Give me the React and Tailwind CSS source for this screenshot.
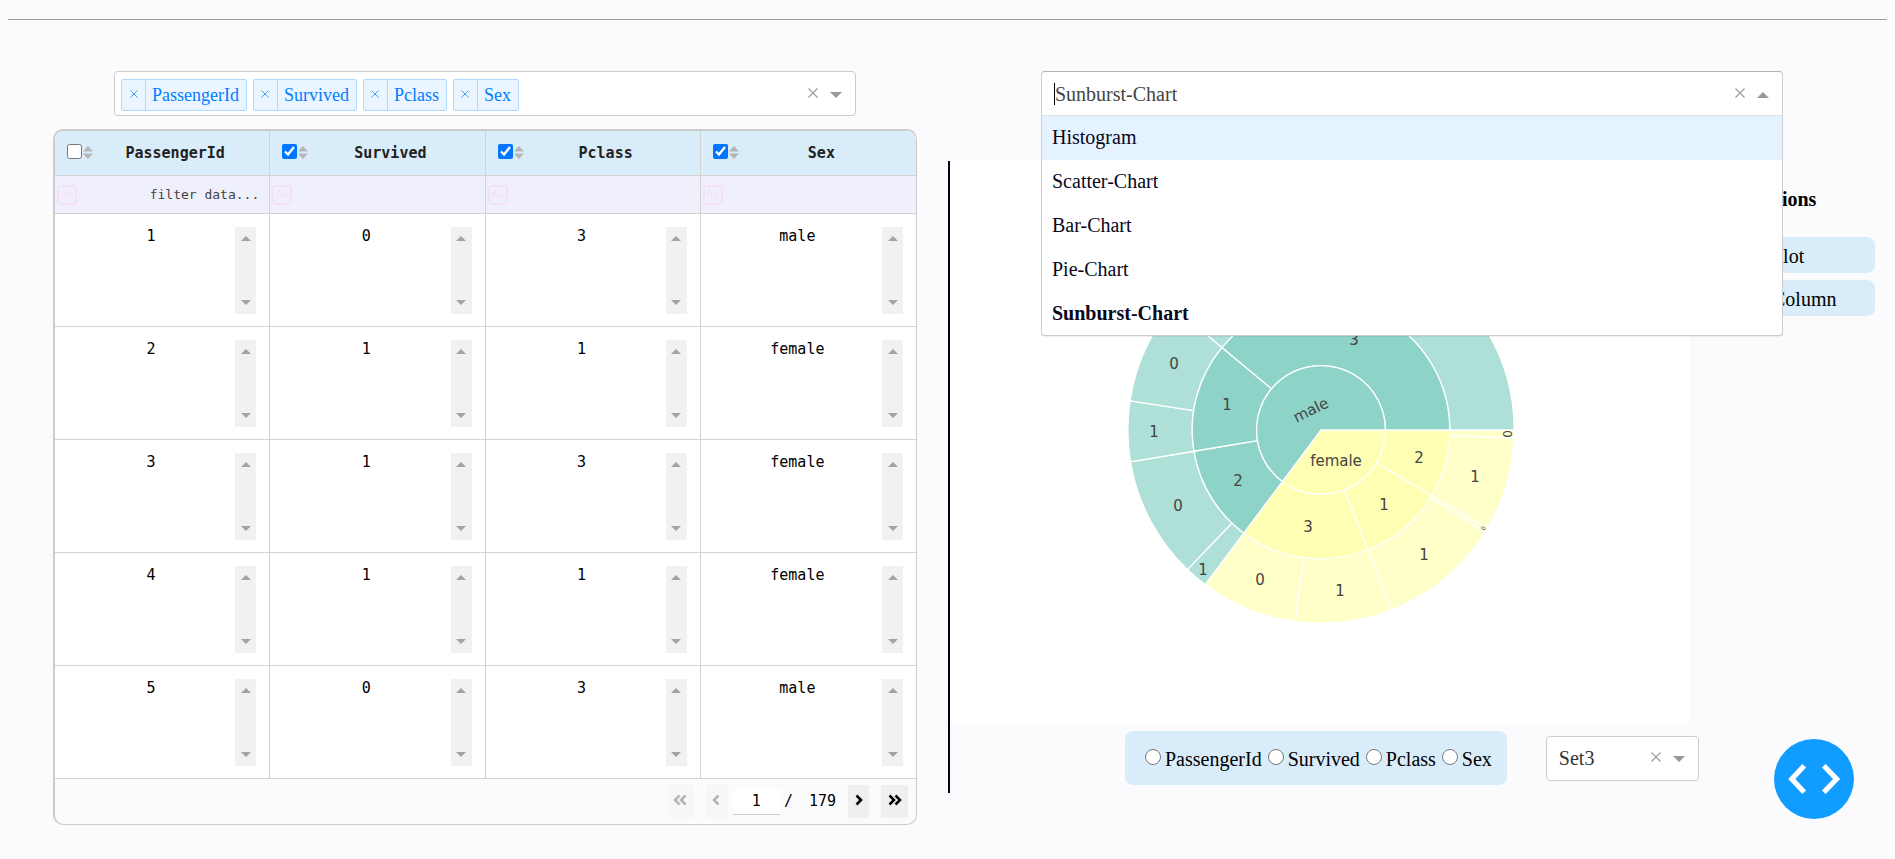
import React from "react";

const COLUMNS = ["PassengerId", "Survived", "Pclass", "Sex"];

const ROWS = [
  ["1", "0", "3", "male"],
  ["2", "1", "1", "female"],
  ["3", "1", "3", "female"],
  ["4", "1", "1", "female"],
  ["5", "0", "3", "male"],
];

const CHARTS = ["Histogram", "Scatter-Chart", "Bar-Chart", "Pie-Chart", "Sunburst-Chart"];

/* Passenger counts, in the clockwise order in which the slices are laid out. */
const TREE = [
  {
    label: "female",
    fill: "#ffffb3",
    children: [
      { label: "2", leaves: [["0", 6], ["1", 70]] },
      { label: "1", leaves: [["0", 3], ["1", 91]] },
      { label: "3", leaves: [["1", 72], ["0", 72]] },
    ],
  },
  {
    label: "male",
    fill: "#8dd3c7",
    children: [
      { label: "2", leaves: [["1", 17], ["0", 91]] },
      { label: "1", leaves: [["1", 45], ["0", 77]] },
      { label: "3", leaves: [["1", 47], ["0", 300]] },
    ],
  },
];

const TOTAL = 891;
const RING = 64.4;

function point(radius, angle) {
  return `${(radius * Math.cos(angle)).toFixed(2)} ${(radius * Math.sin(angle)).toFixed(2)}`;
}

function sector(inner, outer, from, to) {
  const large = to - from > Math.PI ? 1 : 0;
  const start = inner === 0 ? "M0 0" : `M${point(inner, from)}`;
  const back = inner === 0 ? "" : `L${point(inner, to)}A${inner} ${inner} 0 ${large} 0 ${point(inner, from)}`;
  return `${start}L${point(outer, from)}A${outer} ${outer} 0 ${large} 1 ${point(outer, to)}${back}Z`;
}

function buildSlices() {
  const slices = [];
  const turn = (Math.PI * 2) / TOTAL;
  let count = 0;
  TREE.forEach((sex) => {
    const sexStart = count;
    sex.children.forEach((pclass) => {
      const classStart = count;
      pclass.leaves.forEach(([, n]) => {
        slices.push({ d: sector(RING * 2, RING * 3, count * turn, (count + n) * turn), fill: sex.fill, opacity: 0.7 });
        count += n;
      });
      slices.push({ d: sector(RING, RING * 2, classStart * turn, count * turn), fill: sex.fill, opacity: 1 });
    });
    slices.push({ d: sector(0, RING, sexStart * turn, count * turn), fill: sex.fill, opacity: 1 });
  });
  return slices;
}

const LABELS = [
  { text: "male", x: -10, y: -20, rotate: -26 },
  { text: "female", x: 15, y: 31 },
  { text: "3", x: 33, y: -90 },
  { text: "1", x: -94, y: -25 },
  { text: "2", x: -83, y: 51 },
  { text: "3", x: -13, y: 97 },
  { text: "1", x: 63, y: 75 },
  { text: "2", x: 98, y: 28 },
  { text: "0", x: -147, y: -66 },
  { text: "1", x: -167, y: 2 },
  { text: "0", x: -143, y: 76 },
  { text: "1", x: -118, y: 140 },
  { text: "0", x: -61, y: 150 },
  { text: "1", x: 19, y: 161 },
  { text: "1", x: 103, y: 125 },
  { text: "1", x: 154, y: 47 },
  { text: "0", x: 187, y: 4, rotate: -90, size: 12 },
  { text: "0", x: 162, y: 98, rotate: -60, size: 6 },
];

function Sunburst() {
  return (
    <svg viewBox="-371 -269 740 562" className="block w-[740px] h-[562px]" role="img" aria-label="Sunburst chart">
      {buildSlices().map((slice, i) => (
        <path key={i} d={slice.d} fill={slice.fill} fillOpacity={slice.opacity} stroke="#ffffff" strokeWidth="1.3" />
      ))}
      {LABELS.map((label, i) => (
        <text
          key={i}
          transform={`translate(${label.x} ${label.y}) rotate(${label.rotate || 0})`}
          fontSize={label.size || 15}
          textAnchor="middle"
          dominantBaseline="central"
          fill="#444444"
          fontFamily="Verdana, 'DejaVu Sans', sans-serif"
        >
          {label.text}
        </text>
      ))}
    </svg>
  );
}

function Cross({ className }) {
  return (
    <svg viewBox="0 0 10 10" className={className} fill="none" stroke="currentColor" strokeWidth="1.1" aria-hidden="true">
      <path d="M0.5 0.5L9.5 9.5M9.5 0.5L0.5 9.5" />
    </svg>
  );
}

function Caret({ up = false, className }) {
  return (
    <svg viewBox="0 0 12 6" className={className} fill="currentColor" aria-hidden="true">
      <path d={up ? "M0 6L6 0L12 6Z" : "M0 0L6 6L12 0Z"} />
    </svg>
  );
}

function SelectControls({ up }) {
  return (
    <div className="flex items-center gap-3 pr-[13px]">
      <button type="button" aria-label="Clear" className="pb-0.5 text-[#999999]">
        <Cross className="block size-2.5" />
      </button>
      <button type="button" aria-label="Toggle options" className="pt-0.5">
        <Caret up={up} className="block w-3 h-1.5 text-[#999999]" />
      </button>
    </div>
  );
}

function Tag({ name }) {
  return (
    <span className="flex h-8 rounded-xs border border-[#b1d9ff] bg-[#ebf5ff] text-[#007eff]">
      <button type="button" aria-label={`Remove ${name}`} className="flex w-6 items-center justify-center border-r border-[#b1d9ff] pb-0.5">
        <Cross className="block size-2 opacity-80" />
      </button>
      <span className="pr-[7px] pl-1.5 text-lg leading-[30px]">{name}</span>
    </span>
  );
}

function ColumnPicker() {
  return (
    <div className="mx-[61px] flex h-[45px] items-center justify-between rounded-[4px] border border-[#cccccc] bg-white">
      <div className="flex gap-1.5 pt-0.5 pl-1.5">
        {COLUMNS.map((name) => (
          <Tag key={name} name={name} />
        ))}
      </div>
      <SelectControls />
    </div>
  );
}

function SortIcon() {
  return (
    <svg viewBox="0 0 10 13" className="block w-2.5 h-[13px]" fill="#b5b5b5" aria-hidden="true">
      <path d="M0 5.5L5 0L10 5.5ZM0 7.5L5 13L10 7.5Z" />
    </svg>
  );
}

function CellScrollbar() {
  return (
    <div className="flex h-[87px] w-[21px] flex-col items-center justify-between bg-[#f1f1f1] py-[9px]">
      <Caret up className="block w-2.5 h-[5px] text-[#a3a3a3]" />
      <Caret className="block w-2.5 h-[5px] text-[#a3a3a3]" />
    </div>
  );
}

function DataTable() {
  return (
    <div className="overflow-hidden rounded-[10px] border border-t-2 border-l-2 border-[#cccccc] font-['DejaVu_Sans_Mono',monospace]">
      <table className="w-full table-fixed border-separate border-spacing-0">
        <thead>
          <tr className="h-[45px] bg-[#d9ecf9]">
            {COLUMNS.map((name, i) => (
              <th key={name} className="border-r border-b border-[#d3d3d3] p-0 last:border-r-0">
                <div className="flex items-center">
                  <div className="flex items-center gap-px pb-1 pl-3">
                    <input type="checkbox" aria-label={`Select ${name}`} defaultChecked={i > 0} className="block size-[15px] accent-[#0075ff]" />
                    <button type="button" aria-label={`Sort by ${name}`} className="pt-0.5">
                      <SortIcon />
                    </button>
                  </div>
                  <span className="flex-1 pr-3 text-center text-[15px] leading-5 font-bold text-[#222222]">{name}</span>
                </div>
              </th>
            ))}
          </tr>
          <tr className="h-[38px] bg-[#f0f0fd]">
            {COLUMNS.map((name, i) => (
              <th key={name} className="border-r border-b border-[#d3d3d3] p-0 font-normal last:border-r-0">
                <div className="flex items-center pr-2.5 pl-0.5">
                  <button
                    type="button"
                    aria-label={`Case sensitivity for ${name}`}
                    className="size-5 shrink-0 rounded-[4px] border-2 border-[#f5e1f7] text-[11px] leading-4 text-[#f5e1f7]"
                  >
                    Aa
                  </button>
                  <input
                    type="text"
                    aria-label={`Filter ${name}`}
                    placeholder={i === 0 ? "filter data..." : ""}
                    className="w-full min-w-0 bg-transparent text-right text-[13px] leading-5 outline-none placeholder:text-[#444444]"
                  />
                </div>
              </th>
            ))}
          </tr>
        </thead>
        <tbody>
          {ROWS.map((row) => (
            <tr key={row[0]} className="h-[113px] bg-white">
              {row.map((value, i) => (
                <td key={i} className="border-r border-b border-[#d3d3d3] p-0 last:border-r-0">
                  <div className="flex pr-[13px] pl-3">
                    <span className="flex-1 text-center text-[15px] leading-[18px] text-black">{value}</span>
                    <CellScrollbar />
                  </div>
                </td>
              ))}
            </tr>
          ))}
        </tbody>
      </table>
      <Pagination />
    </div>
  );
}

function Chevrons({ flip, double }) {
  return (
    <svg
      viewBox={double ? "0 0 14 12" : "0 0 8 12"}
      className={double ? "block w-3.5 h-3" : "block w-2 h-3"}
      fill="none"
      stroke="currentColor"
      strokeWidth="2.5"
      aria-hidden="true"
    >
      <g transform={flip ? (double ? "matrix(-1 0 0 1 14 0)" : "matrix(-1 0 0 1 8 0)") : undefined}>
        <path d="M1.5 1.5L6 6L1.5 10.5" />
        {double && <path d="M7.5 1.5L12 6L7.5 10.5" />}
      </g>
    </svg>
  );
}

function Pagination() {
  return (
    <div className="flex h-[45px] items-center justify-end pr-2 text-[15px] text-black">
      <button type="button" disabled aria-label="First page" className="flex h-[33px] w-[27px] justify-center bg-[#f7f7f9] pt-[9px] text-[#b3b3b4]">
        <Chevrons flip double />
      </button>
      <button type="button" disabled aria-label="Previous page" className="ml-3 flex h-[33px] w-[21px] justify-center bg-[#f7f7f9] pt-[9px] text-[#b3b3b4]">
        <Chevrons flip />
      </button>
      <input
        type="text"
        aria-label="Current page"
        defaultValue="1"
        className="ml-1.5 h-[26px] w-[47px] border-b border-[#cccccc] bg-white text-center outline-none"
      />
      <span className="ml-1">/</span>
      <span className="ml-4">179</span>
      <button type="button" aria-label="Next page" className="ml-3 flex h-[33px] w-[21px] justify-center bg-[#efefef] pt-[9px]">
        <Chevrons />
      </button>
      <button type="button" aria-label="Last page" className="ml-3 flex h-[33px] w-[27px] justify-center bg-[#efefef] pt-[9px]">
        <Chevrons double />
      </button>
    </div>
  );
}

function ChartPicker() {
  return (
    <div className="relative z-10 mr-28 ml-[93px]">
      <div className="flex h-[45px] items-center justify-between rounded-t-[4px] border border-[#cccccc] border-t-[#b3b3b3] border-b-[#e0e0e0] bg-white">
        <div className="flex min-w-0 flex-1 items-center pl-3 text-xl text-[#444444]">
          <span className="h-[22px] w-px bg-black" />
          <input
            type="text"
            role="combobox"
            aria-label="Chart type"
            aria-expanded="true"
            aria-controls="chart-options"
            defaultValue="Sunburst-Chart"
            className="min-w-0 flex-1 bg-transparent outline-none"
          />
        </div>
        <SelectControls up />
      </div>
      <ul
        id="chart-options"
        role="listbox"
        aria-label="Chart type"
        className="absolute top-full right-0 left-0 overflow-hidden rounded-b-[4px] border border-t-0 border-[#cccccc] bg-white text-xl leading-7 shadow-[0_1px_0_rgba(0,0,0,0.06)]"
      >
        {CHARTS.map((name) => (
          <li
            key={name}
            role="option"
            aria-selected={name === "Sunburst-Chart"}
            className="px-2.5 pt-[7px] pb-[9px] text-[#08081c] first:bg-[#e5f2ff] last:pb-2 aria-selected:font-bold"
          >
            {name}
          </li>
        ))}
      </ul>
    </div>
  );
}

function ChartOptions() {
  return (
    <aside className="flex flex-1 flex-col pr-5 text-xl text-black">
      <h2 className="mt-6 text-center font-bold">Options</h2>
      <div className="mt-6 flex flex-col gap-[7px] pl-3">
        <button type="button" className="h-9 rounded-lg bg-[#d9ecf9] pt-px pl-[70px] text-left">
          Plot
        </button>
        <button type="button" className="h-9 rounded-lg bg-[#d9ecf9] pt-px pl-[70px] text-left">
          Column
        </button>
      </div>
    </aside>
  );
}

function FeatureRadios() {
  return (
    <fieldset aria-label="Feature" className="flex h-[54px] items-center gap-1.5 rounded-lg bg-[#d9ecf9] pr-[15px] pl-5 text-xl text-black">
      {COLUMNS.map((name) => (
        <label key={name} className="flex items-center gap-1 pt-0.5">
          <input type="radio" name="feature" className="mb-1 block size-4" />
          {name}
        </label>
      ))}
    </fieldset>
  );
}

function PaletteSelect() {
  return (
    <div className="flex h-[45px] w-[153px] shrink-0 items-center rounded-[4px] border border-[#cccccc] bg-white">
      <select aria-label="Colour palette" className="min-w-0 flex-1 appearance-none bg-transparent pl-3 text-xl text-[#333333] outline-none">
        <option>Set3</option>
      </select>
      <SelectControls />
    </div>
  );
}

function DevToolsButton() {
  return (
    <button type="button" aria-label="Open developer tools" className="fixed right-[41px] bottom-10 size-20 rounded-full bg-[#119dff] text-white">
      <svg viewBox="0 0 80 80" className="block size-20" fill="none" stroke="currentColor" strokeWidth="5.2" aria-hidden="true">
        <path d="M30.2 26.8L17.8 40L30.2 53.2M49.8 26.8L62.6 40L49.8 53.2" />
      </svg>
    </button>
  );
}

export default function App() {
  return (
    <div className="min-h-screen bg-[#fbfbfe] pt-[19px] font-['Liberation_Serif',serif] text-[#050315]">
      <hr className="mx-2 border-t border-[#9b9b9d]" />
      <main className="flex pt-[51px]">
        <section className="w-[917px] shrink-0 pl-[53px]">
          <ColumnPicker />
          <div className="mt-[13px]">
            <DataTable />
          </div>
        </section>
        <section className="min-w-0 flex-1 pl-[31px]">
          <ChartPicker />
          <div className="mt-[45px] flex h-[632px] border-l-2 border-[#050315]">
            <div className="w-[740px] shrink-0">
              <div className="bg-white">
                <Sunburst />
              </div>
              <div className="mt-2 flex w-max items-center gap-[39px] pl-[175px]">
                <FeatureRadios />
                <PaletteSelect />
              </div>
            </div>
            <ChartOptions />
          </div>
        </section>
      </main>
      <DevToolsButton />
    </div>
  );
}
